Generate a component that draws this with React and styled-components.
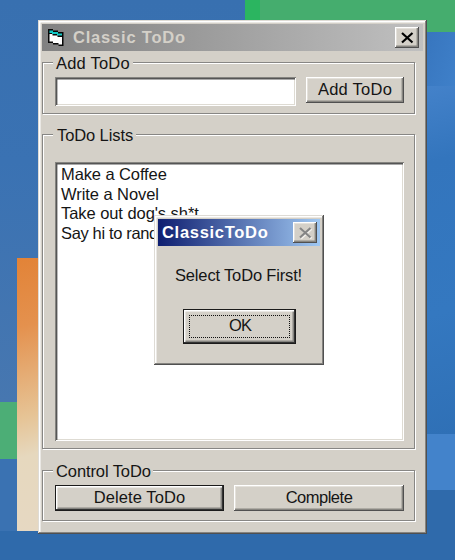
import React from "react";
import styled, { createGlobalStyle, css } from "styled-components";

const FACE = "#d4d0c8";

const GlobalStyle = createGlobalStyle`
  * { box-sizing: border-box; }
  body { margin: 0; }
  button, input { font: inherit; color: inherit; border: 0; border-radius: 0; outline: 0; }
`;

const Desktop = styled.main`
  width: 455px;
  height: 560px;
  padding: 20px 0 0 38px;
  overflow: hidden;
  position: relative;
  color: #151515;
  font: 16.5px/19.5px "Liberation Sans", Arial, sans-serif;
  background:
    linear-gradient(#2bb560, #2bb560) 245px 0 / 15px 32px no-repeat,
    linear-gradient(#45ad6e, #45ad6e) 260px 0 / 195px 32px no-repeat,
    linear-gradient(165deg, #e28337 0%, #e4914e 25%, #e6c496 58%, #e6d8be 72%, #e6d8c2 100%) 17px 258px / 22px 273px no-repeat,
    linear-gradient(#4cae76, #4cae76) 0 402px / 17px 57px no-repeat,
    linear-gradient(#3a72b2, #3a72b2) 0 459px / 17px 72px no-repeat,
    linear-gradient(#2f6aab, #2f6aab) 0 531px / 455px 29px no-repeat,
    linear-gradient(#2f6aab, #2f6aab) 420px 490px / 35px 41px no-repeat,
    linear-gradient(#4383cb, #4383cb) 420px 434px / 35px 56px no-repeat,
    linear-gradient(110deg, #3674bd, #3f80c9) 420px 32px / 35px 54px no-repeat,
    linear-gradient(165deg, #4482ca 0%, #3375bd 22%, #3478c0 65%, #2f70b6 100%) 420px 86px / 35px 348px no-repeat,
    linear-gradient(180deg, #3870b0 0%, #3a72b3 40%, #4777b0 100%) 0 0 / 455px 402px no-repeat;
`;

const Frame = styled.section`
  display: flex;
  flex-direction: column;
  padding: 4px;
  background: ${FACE};
  box-shadow:
    inset -1px -1px #505050,
    inset 1px 1px #dedbd5,
    inset -2px -2px #858480,
    inset 2.5px 2.5px #fff;
`;

const MainWindow = styled(Frame)`
  width: 389px;
  height: 514px;
`;

const Dialog = styled(Frame)`
  position: absolute;
  left: 154px;
  top: 215px;
  width: 170px;
  height: 150px;
  align-items: stretch;
`;

const TitleBar = styled.header`
  display: flex;
  align-items: center;
  flex: none;
  height: 27px;
  font-weight: bold;
  ${(p) =>
    p.$active
      ? css`
          padding: 0 3px 0 4px;
          color: #fff;
          letter-spacing: 0.7px;
          background: linear-gradient(90deg, #0e1e70, #a0c8f2);
        `
      : css`
          padding: 0 4px 0 6px;
          color: ${FACE};
          letter-spacing: 0.8px;
          background: linear-gradient(90deg, #818181, #c0c0c0);
        `}
`;

const Title = styled.h1`
  flex: 1;
  margin: 0;
  font: inherit;
  white-space: nowrap;
`;

const AppIcon = styled.svg`
  width: 16px;
  height: 18px;
  margin-right: 9px;
`;

const raised = css`
  background: ${FACE};
  box-shadow:
    inset -1px -1px #505050,
    inset 1px 1px #fff,
    inset -2.4px -2.4px #878580,
    inset 2px 2px #e4e1db;
`;

const CloseButton = styled.button`
  display: flex;
  align-items: center;
  justify-content: center;
  flex: none;
  width: 24px;
  height: 21px;
  padding: 0;
  color: ${(p) => (p.$disabled ? "#858585" : "#000")};
  ${raised}

  svg {
    display: block;
    width: 13px;
    height: 12px;
    filter: ${(p) => (p.$disabled ? "drop-shadow(1px 1px 0 #f4f2ee)" : "none")};
  }
`;

const Group = styled.fieldset`
  width: 373px;
  height: ${(p) => p.$height}px;
  min-width: 0;
  margin: ${(p) => p.$gap}px 0 0;
  padding: ${(p) => p.$inset}px 10px 0 12px;
  border: 1px solid #878684;
  box-shadow: 1px 1px #fff, inset 1px 1px #fff;
`;

const Legend = styled.legend`
  width: ${(p) => p.$width}px;
  height: 17px;
  margin-left: -2px;
  padding-left: ${(p) => p.$indent}px;
  line-height: 19px;
  letter-spacing: ${(p) => p.$tracking || 0}px;
  white-space: nowrap;
  background: ${FACE};
`;

const Row = styled.div`
  display: flex;
  gap: ${(p) => p.$gap}px;
`;

const sunken = css`
  background: #fff;
  box-shadow:
    inset 1px 1px #858480,
    inset -1px -1px #fff,
    inset 2.4px 2.4px #555,
    inset -2px -2px #dedbd3;
`;

const TextField = styled.input`
  width: 241px;
  height: 29px;
  padding: 4px;
  ${sunken}
`;

const PushButton = styled.button`
  width: ${(p) => p.$width}px;
  height: 26px;
  padding: 0 0 1px;
  line-height: 19px;
  letter-spacing: ${(p) => p.$tracking || 0}px;
  white-space: nowrap;
  ${raised}
  ${(p) =>
    p.$default &&
    css`
      box-shadow:
        inset 0 0 0 1px #1b1b1b,
        inset -2px -2px #333,
        inset 2.4px 2.4px #fff,
        inset -3.5px -3.5px #858480;
    `}
`;

const OkButton = styled(PushButton)`
  align-self: center;
  flex: none;
  height: 35px;
  padding: 6px;
`;

const FocusRing = styled.span`
  display: block;
  height: 23px;
  padding-left: 2px;
  border: 1px dotted #111;
  line-height: 19px;
`;

const ListBox = styled.ul`
  width: 349px;
  height: 279px;
  margin: 0;
  padding: 3px 0 0 6px;
  list-style: none;
  overflow: hidden;
  ${sunken}
`;

const ListItem = styled.li`
  height: 19.5px;
  line-height: 19.5px;
  white-space: nowrap;
  letter-spacing: ${(p) => p.$tracking || 0}px;
`;

const Message = styled.p`
  margin: 19px 0 24px 17px;
  height: 20px;
  line-height: 20px;
  letter-spacing: -0.16px;
  white-space: nowrap;
`;

const CloseGlyph = () => (
  <svg viewBox="0 0 13 12" fill="none" stroke="currentColor" strokeWidth="2.2">
    <path d="M1 1 11.5 10.5M11.5 1 1 10.5" />
  </svg>
);

const FormIcon = () => (
  <AppIcon viewBox="0 0 16 18">
    <path d="M0 0H5V1.5H10V3H15.5V17H10.5V15.5H5V14H0Z" fill="#080808" />
    <path d="M1.5 1.5H5V3H10V4.5H14V6.5H9V5H4V4H1.5Z" fill="#12c9c5" />
    <path d="M1.5 5H4.5V6.5H9.5V8H14V15.5H10.5V14H5V12.5H1.5Z" fill="#fff" />
  </AppIcon>
);

const items = [
  { text: "Make a Coffee", tracking: -0.1 },
  { text: "Write a Novel", tracking: -0.06 },
  { text: "Take out dog's sh*t", tracking: -0.06 },
  { text: "Say hi to random", tracking: -0.35 },
];

export default function App() {
  return (
    <Desktop>
      <GlobalStyle />
      <MainWindow>
        <TitleBar>
          <FormIcon />
          <Title>Classic ToDo</Title>
          <CloseButton aria-label="Close">
            <CloseGlyph />
          </CloseButton>
        </TitleBar>
        <Group $height={60} $gap={3} $inset={6}>
          <Legend $width={80} $indent={3} $tracking={0.2}>Add ToDo</Legend>
          <Row $gap={10}>
            <TextField aria-label="New ToDo" />
            <PushButton $width={98} $tracking={0.25}>Add ToDo</PushButton>
          </Row>
        </Group>
        <Group $height={323} $gap={12} $inset={19}>
          <Legend $width={83} $indent={4} $tracking={-0.1}>ToDo Lists</Legend>
          <ListBox>
            {items.map((item) => (
              <ListItem key={item.text} $tracking={item.tracking}>{item.text}</ListItem>
            ))}
          </ListBox>
        </Group>
        <Group $height={59} $gap={13} $inset={6}>
          <Legend $width={100} $indent={3} $tracking={-0.1}>Control ToDo</Legend>
          <Row $gap={10}>
            <PushButton $width={169} $default $tracking={0.1}>Delete ToDo</PushButton>
            <PushButton $width={170} $tracking={-0.5}>Complete</PushButton>
          </Row>
        </Group>
      </MainWindow>
      <Dialog role="alertdialog">
        <TitleBar $active>
          <Title>ClassicToDo</Title>
          <CloseButton $disabled aria-label="Close">
            <CloseGlyph />
          </CloseButton>
        </TitleBar>
        <Message>Select ToDo First!</Message>
        <OkButton $width={113} $default $tracking={-0.8}>
          <FocusRing>OK</FocusRing>
        </OkButton>
      </Dialog>
    </Desktop>
  );
}
